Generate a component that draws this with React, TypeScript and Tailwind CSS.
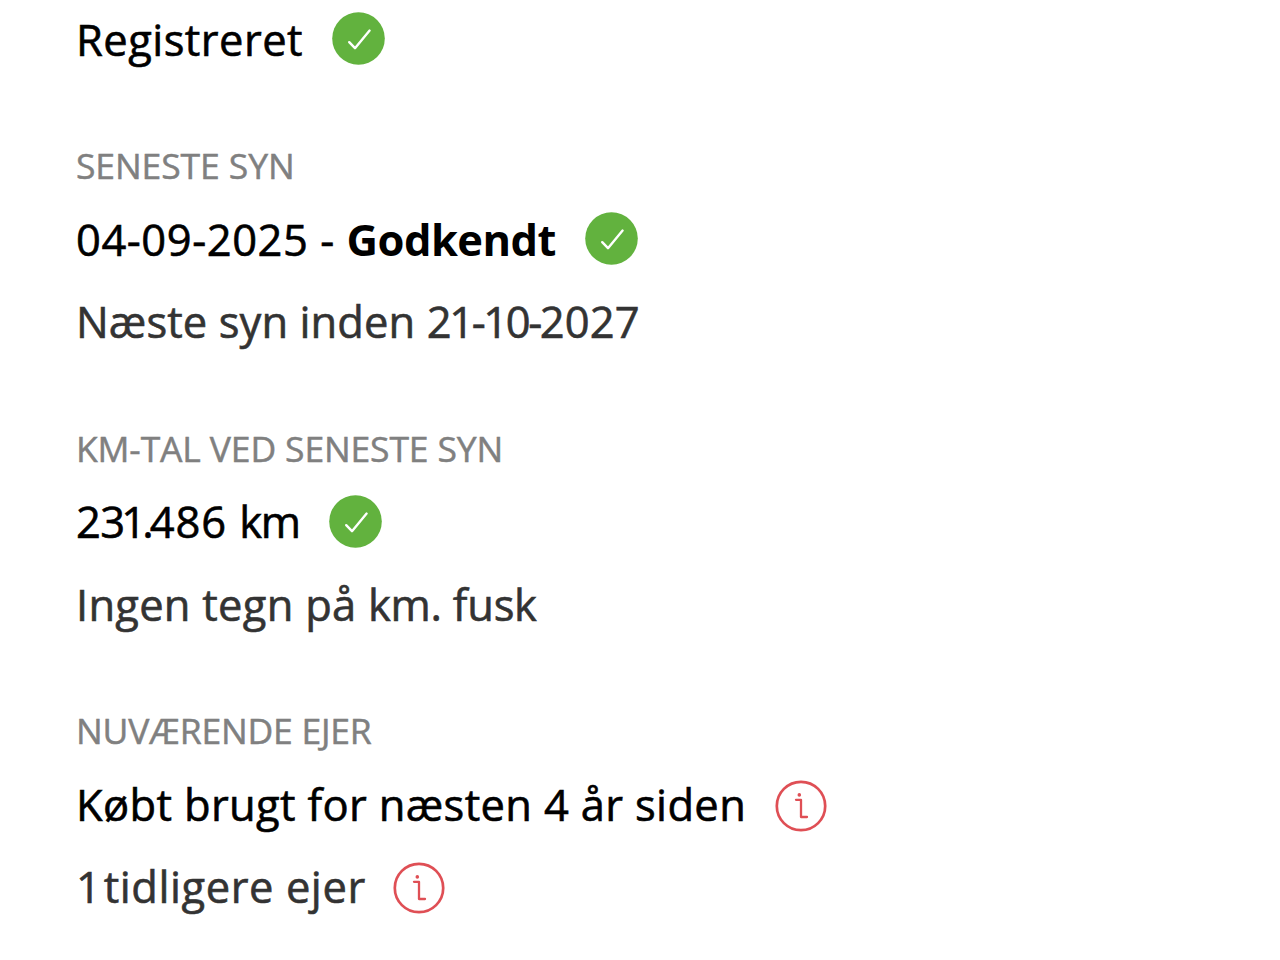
import type { ReactNode } from 'react'

function CheckIcon() {
  return (
    <svg className="h-[53px] w-[53px] shrink-0" viewBox="0 0 53 53" fill="none">
      <circle cx="26.5" cy="26.5" r="26.3" fill="#62b23e" />
      <path d="M17.2 30.2L23 36.2L37.6 18.6" stroke="#fff" strokeWidth="2.4" strokeLinecap="round" strokeLinejoin="round" />
    </svg>
  )
}

function InfoIcon() {
  return (
    <svg className="mt-[4px] h-[52px] w-[52px] shrink-0" viewBox="0 0 52 52" fill="none" stroke="#df4f55">
      <circle cx="26" cy="26" r="24.2" strokeWidth="2.7" />
      <circle cx="24.3" cy="14.9" r="1.8" fill="#df4f55" stroke="none" />
      <path d="M21 19.8H26V37H32" strokeWidth="2.3" strokeLinecap="round" strokeLinejoin="round" />
    </svg>
  )
}

function Label({ children, className }: { children: ReactNode; className: string }) {
  return (
    <h3 className={`mt-[55.5px] h-[62px] text-[35.5px] leading-[60px] text-[#808080] [-webkit-text-stroke:0.5px] ${className}`}>
      {children}
    </h3>
  )
}

function Row({ children, icon, className }: { children: ReactNode; icon?: ReactNode; className: string }) {
  return (
    <div className="flex h-[82.5px] items-center gap-[29px] text-[43.5px] leading-[82px]">
      <span className={`pt-[2px] [-webkit-text-stroke:0.6px] ${className}`}>{children}</span>
      {icon}
    </div>
  )
}

export default function App() {
  return (
    <main className="h-[960px] w-[1280px] overflow-hidden bg-white pl-[76px] font-['Open_Sans','Noto_Sans',sans-serif] whitespace-nowrap">
      <div className="-mt-[2.7px]">
        <Row className="tracking-[0.45px] text-black" icon={<CheckIcon />}>Registreret</Row>

        <Label className="tracking-[-0.1px]">SENESTE SYN</Label>
        <Row className="tracking-[0.54px] text-black" icon={<CheckIcon />}>
          04-09-2025 - <strong className="font-bold tracking-[-0.55px] [-webkit-text-stroke:0px]">Godkendt</strong>
        </Row>
        <Row className="tracking-[0.08px] text-[#333]">
          Næste syn inden <span className="tracking-[-2.4px]">21-10-</span>2027
        </Row>

        <Label className="tracking-[-0.15px]">KM-TAL VED SENESTE SYN</Label>
        <Row className="tracking-[0.9px] text-black" icon={<CheckIcon />}>
          <span className="tracking-[-0.6px]">2</span>
          <span className="tracking-[-3.9px]">31.</span>
          486 <span className="tracking-[-1.3px]">km</span>
        </Row>
        <Row className="tracking-[0.25px] text-[#333]">
          Ingen tegn på <span className="tracking-[-0.25px]">km. fusk</span>
        </Row>

        <Label className="tracking-[-0.22px]">NUVÆRENDE EJER</Label>
        <Row className="tracking-[0.34px] text-black" icon={<InfoIcon />}>Købt brugt for næsten 4 år siden</Row>
        <Row className="-mr-[2px] tracking-[0.55px] text-[#333]" icon={<InfoIcon />}>
          <span className="tracking-[-4.2px]">1 </span>
          tidligere ejer
        </Row>
      </div>
    </main>
  )
}
